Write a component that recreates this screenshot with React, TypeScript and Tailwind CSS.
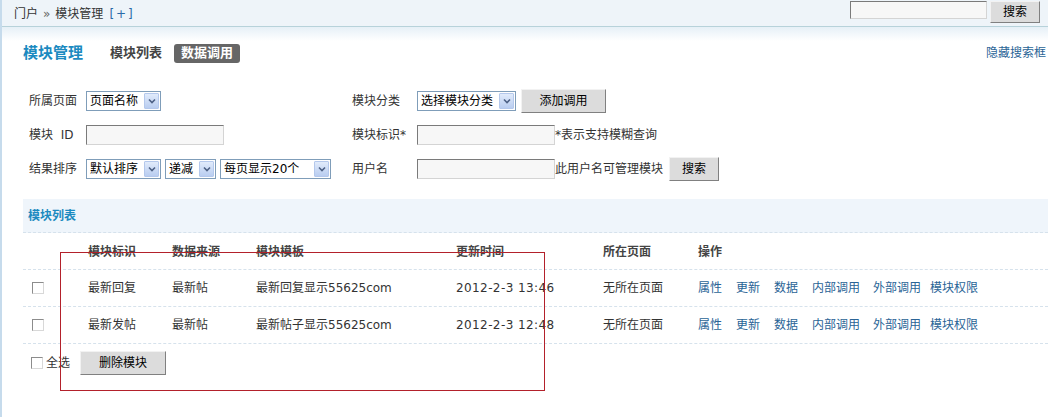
import React from 'react'

const FONT = 'font-["DejaVu_Sans","Noto_Sans_CJK_SC",sans-serif]'

function Select({ label, w }: { label: string; w: string }) {
  return (
    <div className={`${w} h-[20px] flex items-center justify-between border border-[#7f9db9] bg-white pl-[3px] pr-[1px]`}>
      <span className="text-[12px] text-black leading-none whitespace-nowrap">{label}</span>
      <span className="w-[15px] h-[16px] flex items-center justify-center bg-linear-to-b from-[#e1ebfb] to-[#b9cdf0] border border-[#b4c8ec] rounded-[1px]">
        <svg width="8" height="6" viewBox="0 0 8 6">
          <path d="M1 1.5 L4 4.5 L7 1.5" stroke="#4d6185" strokeWidth="1.6" fill="none" />
        </svg>
      </span>
    </div>
  )
}

function Input({ w }: { w: string }) {
  return (
    <div className={`${w} h-[20px] bg-[#f7f7f7] border border-t-[#7a7a7a] border-l-[#7a7a7a] border-r-[#d4d4d4] border-b-[#d4d4d4]`} />
  )
}

function Btn({ label, w, h = 'h-[24px]' }: { label: string; w: string; h?: string }) {
  return (
    <div className={`${w} ${h} flex items-center justify-center bg-[#dcdcdc] border border-t-[#f2f2f2] border-l-[#f2f2f2] border-r-[#808080] border-b-[#808080] text-[12px] text-black`}>
      {label}
    </div>
  )
}

function Check() {
  return <span className="inline-block w-[12px] h-[12px] bg-white border border-t-[#8c8c8c] border-l-[#8c8c8c] border-r-[#d8d8d8] border-b-[#d8d8d8]" />
}

const ops = [
  { t: '属性', m: 'mr-[14px]' },
  { t: '更新', m: 'mr-[14px]' },
  { t: '数据', m: 'mr-[14px]' },
  { t: '内部调用', m: 'mr-[13px]' },
  { t: '外部调用', m: 'mr-[9px]' },
  { t: '模块权限', m: '' },
]

const rows = [
  { id: '最新回复', src: '最新帖', tpl: '最新回复显示55625com', time: '2012-2-3 13:46', page: '无所在页面' },
  { id: '最新发帖', src: '最新帖', tpl: '最新帖子显示55625com', time: '2012-2-3 12:48', page: '无所在页面' },
]

export default function App() {
  return (
    <div className={`${FONT} relative w-[1048px] h-[417px] overflow-hidden bg-white border-l-2 border-[#c6dbec] text-[12px] text-[#333]`}>
      {/* top bar */}
      <div className="h-[27px] flex items-center justify-between bg-[#eef4f9] border-b border-[#b7d2da] pl-[12px] pr-[8px]">
        <div className="flex items-center text-[12px] text-[#333] pt-[1px]">
          <span>门户</span>
          <span className="mx-[5px] text-[#666]">»</span>
          <span>模块管理</span>
          <span className="ml-[6px] tracking-[2px] text-[#2a6aa8]">[+]</span>
        </div>
        <div className="flex items-start self-start pt-[1px] gap-[3px]">
          <div className="w-[137px] h-[18px] bg-[#f7f7f7] border border-t-[#7a7a7a] border-l-[#7a7a7a] border-r-[#d4d4d4] border-b-[#d4d4d4]" />
          <Btn label="搜索" w="w-[50px]" h="h-[22px]" />
        </div>
      </div>

      {/* title */}
      <div className="h-[50px] pt-[2px] flex items-center justify-between pl-[21px] pr-[2px] bg-[linear-gradient(#e6f0f7,#ffffff_14px)]">
        <div className="flex items-center">
          <span className="text-[15px] font-bold text-[#1b8ac0] mr-[27px]">模块管理</span>
          <span className="text-[13px] font-bold text-[#444] mr-[12px]">模块列表</span>
          <span className="h-[19px] px-[7px] flex items-center rounded-[3px] bg-[#666] text-white text-[13px] font-bold">数据调用</span>
        </div>
        <span className="text-[#2a6496]">隐藏搜索框</span>
      </div>

      {/* search form */}
      <div className="mt-[7px] pl-[27px] flex flex-col">
        <div className="h-[34px] flex items-center">
          <div className="w-[323px] flex items-center">
            <span className="w-[57px]">所属页面</span>
            <Select label="页面名称" w="w-[75px]" />
          </div>
          <span className="w-[65px]">模块分类</span>
          <Select label="选择模块分类" w="w-[99px]" />
          <div className="ml-[5px]"><Btn label="添加调用" w="w-[85px]" /></div>
        </div>
        <div className="h-[34px] flex items-center">
          <div className="w-[323px] flex items-center">
            <span className="w-[57px]">模块&nbsp;&nbsp;ID</span>
            <Input w="w-[138px]" />
          </div>
          <span className="w-[65px]">模块标识*</span>
          <Input w="w-[138px]" />
          <span>*表示支持模糊查询</span>
        </div>
        <div className="h-[34px] flex items-center">
          <div className="w-[323px] flex items-center">
            <span className="w-[57px]">结果排序</span>
            <Select label="默认排序" w="w-[75px]" />
            <div className="ml-[4px]"><Select label="递减" w="w-[51px]" /></div>
            <div className="ml-[4px]"><Select label="每页显示20个" w="w-[111px]" /></div>
          </div>
          <span className="w-[65px]">用户名</span>
          <Input w="w-[138px]" />
          <span>此用户名可管理模块</span>
          <div className="ml-[6px]"><Btn label="搜索" w="w-[50px]" /></div>
        </div>
      </div>

      {/* list */}
      <div className="ml-[21px] mt-[13px]">
        <div className="h-[34px] flex items-center pl-[5px] bg-[#eff5fb] border-b border-dashed border-[#d6e2ec]">
          <span className="font-bold text-[#1b8ac0]">模块列表</span>
        </div>
        <div className="h-[37px] flex items-center pt-[1px] border-b border-dashed border-[#d6e2ec] font-bold text-[#444]">
          <span className="w-[65px]" />
          <span className="w-[84px]">模块标识</span>
          <span className="w-[84px]">数据来源</span>
          <span className="w-[200px]">模块模板</span>
          <span className="w-[147px]">更新时间</span>
          <span className="w-[95px]">所在页面</span>
          <span>操作</span>
        </div>
        {rows.map(r => (
          <div key={r.id} className="h-[37px] flex items-center border-b border-dashed border-[#d6e2ec]">
            <span className="w-[65px] pl-[9px] flex"><Check /></span>
            <span className="w-[84px]">{r.id}</span>
            <span className="w-[84px]">{r.src}</span>
            <span className="w-[200px] whitespace-nowrap">{r.tpl}</span>
            <span className="w-[147px] whitespace-nowrap tracking-[0.4px]">{r.time}</span>
            <span className="w-[95px]">{r.page}</span>
            <span className="flex text-[#2a6496]">
              {ops.map(o => <span key={o.t} className={o.m}>{o.t}</span>)}
            </span>
          </div>
        ))}
        <div className="mt-[7px] flex items-center pl-[8px]">
          <Check />
          <span className="ml-[3px] mr-[10px]">全选</span>
          <Btn label="删除模块" w="w-[86px]" />
        </div>
      </div>

      {/* annotation */}
      <div className="absolute left-[58px] top-[252px] w-[485px] h-[139px] border-[1.5px] border-[#b3212b]" />
    </div>
  )
}
